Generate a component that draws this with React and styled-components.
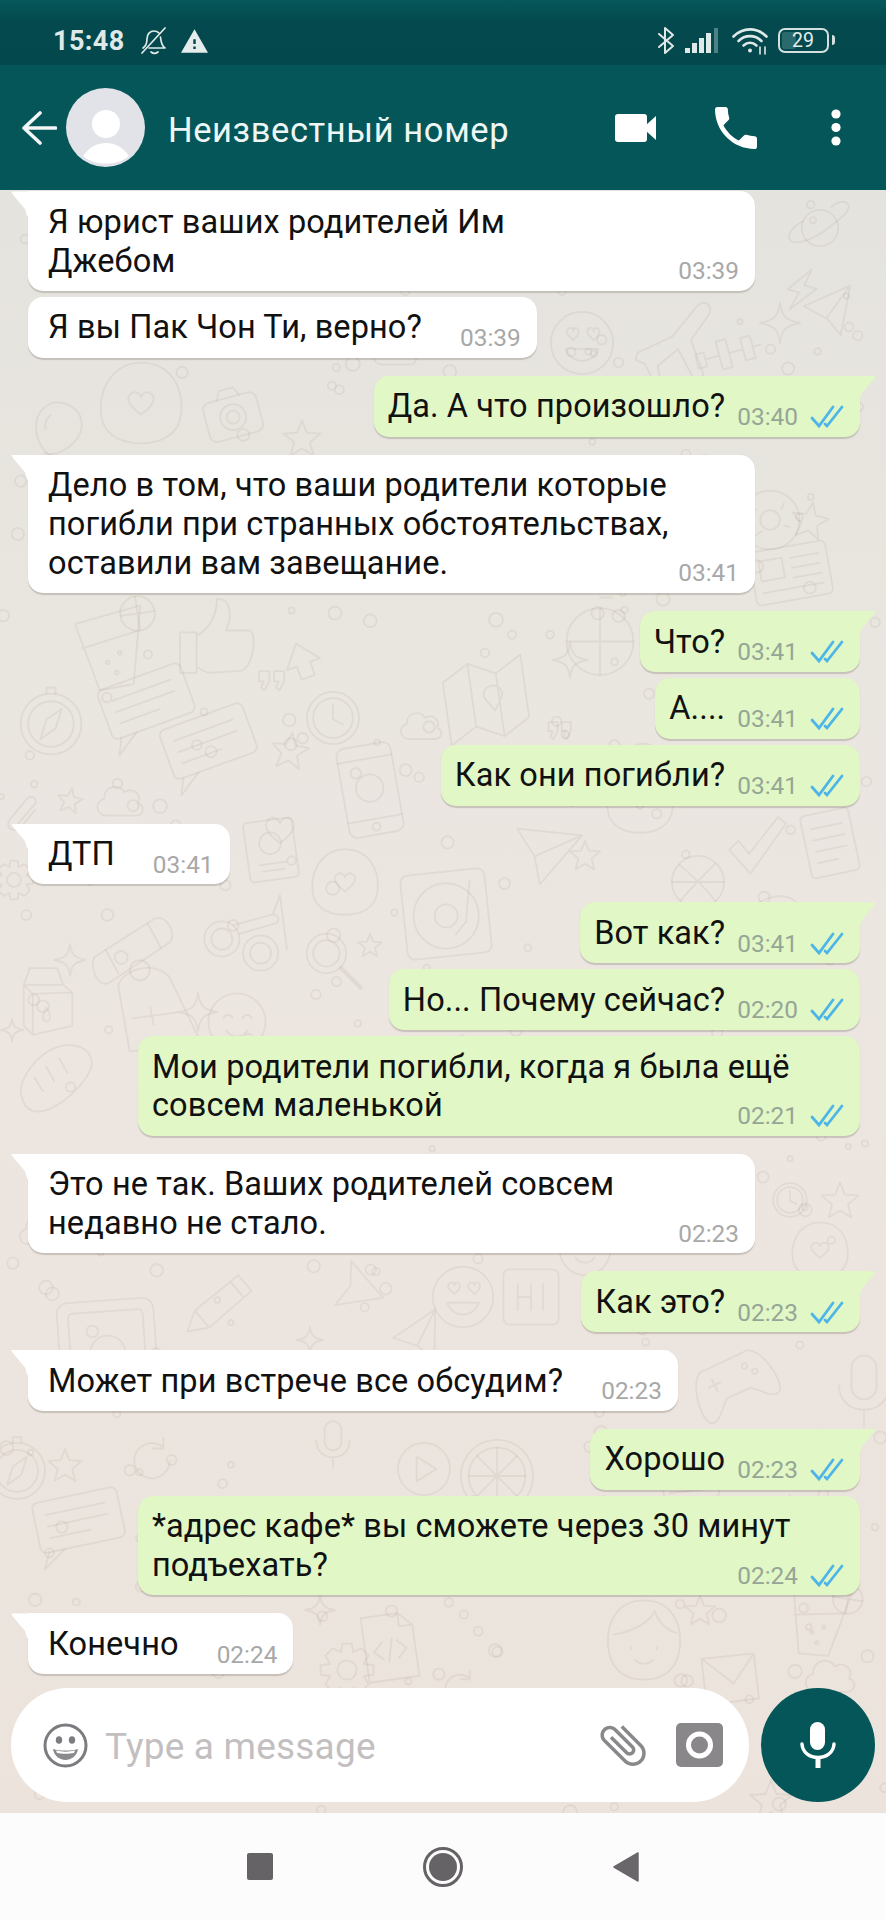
import React from "react";
import styled, { createGlobalStyle } from "styled-components";

const Global = createGlobalStyle`
  html, body { margin: 0; padding: 0; background: #fdfcfd; }
  #root { width: 886px; height: 1920px; }
  * { box-sizing: border-box; }
`;

const Page = styled.div`
  width: 886px;
  height: 1920px;
  display: flex;
  flex-direction: column;
  font-family: Roboto, "Noto Sans", sans-serif;
  overflow: hidden;
`;

/* ---------- status bar ---------- */
const StatusBar = styled.div`
  height: 65px;
  flex: none;
  display: flex;
  align-items: center;
  padding: 16px 52px 0 53px;
  background: linear-gradient(#06585a 0, #03494d 35%, #03484c 100%);
  color: #dfe9e8;
`;
const Clock = styled.span`
  font-size: 27px;
  font-weight: 700;
  letter-spacing: 0.4px;
  width: 74px;
`;
const StatusLeft = styled.div`
  display: flex;
  align-items: center;
  gap: 14px;
  flex: 1;
`;
const StatusRight = styled.div`
  display: flex;
  align-items: center;
  gap: 10px;
`;
const Battery = styled.div`
  position: relative;
  width: 51px;
  height: 25px;
  border: 2.5px solid #d3e0df;
  border-radius: 7px;
  margin: 0 5px 0 -1px;
  display: flex;
  align-items: center;
  justify-content: center;
  font-size: 19.5px;
  color: #e6eeed;
  &::before {
    content: "";
    position: absolute;
    left: 2px;
    top: 2px;
    bottom: 2px;
    width: 14px;
    background: #2b6a6c;
    border-radius: 2px;
  }
  &::after {
    content: "";
    position: absolute;
    right: -8px;
    top: 5px;
    width: 3.5px;
    height: 10px;
    border-radius: 0 3px 3px 0;
    background: #d3e0df;
  }
`;
const BatteryText = styled.span`
  position: relative;
  margin-right: 1px;
`;

/* ---------- header ---------- */
const Header = styled.header`
  height: 125px;
  flex: none;
  display: flex;
  align-items: center;
  padding: 0 45px 0 21px;
  background: #045658;
  position: relative;
  z-index: 2;
`;
const Avatar = styled.svg`
  width: 79px;
  height: 79px;
  margin-left: 9px;
  flex: none;
`;
const Title = styled.div`
  flex: 1;
  margin-left: 23px;
  margin-top: 4px;
  font-size: 34.5px;
  letter-spacing: 0.6px;
  color: #eef6f5;
`;
const Actions = styled.div`
  display: flex;
  align-items: center;
`;
const VideoIcon = styled.svg`
  width: 41px;
  height: 28px;
  margin-right: 59px;
`;
const PhoneIcon = styled.svg`
  width: 42px;
  height: 42px;
  margin-right: 74px;
`;
const DotsIcon = styled.svg`
  width: 10px;
  height: 37px;
`;

/* ---------- chat ---------- */
const Chat = styled.main`
  position: relative;
  flex: 1;
  min-height: 0;
  display: flex;
  flex-direction: column;
  overflow: hidden;
  background: linear-gradient(#e5e3de 0, #e8e5df 22%, #ece6e1 45%, #ece5df 70%, #ebe3dc 100%);
`;
const Wallpaper = styled.svg`
  position: absolute;
  left: 0;
  top: 0;
  width: 886px;
  height: 1623px;
  fill: none;
  stroke: rgba(112, 98, 84, 0.085);
  stroke-width: 1.8;
  stroke-linecap: round;
  stroke-linejoin: round;
  filter: blur(0.35px);
  * { vector-effect: non-scaling-stroke; }
`;
const Messages = styled.div`
  position: relative;
  flex: 1;
  min-height: 0;
  padding: 1.4px 26px 0 28px;
  display: flex;
  flex-direction: column;
`;
const Bubble = styled.div`
  position: relative;
  align-self: ${(p) => (p.$out ? "flex-end" : "flex-start")};
  width: ${(p) => (p.$wide ? (p.$out ? "722px" : "727px") : "auto")};
  margin-top: ${(p) => p.$gap}px;
  padding: 11.5px 16px 10.6px ${(p) => (p.$out ? 14 : 20)}px;
  display: ${(p) => (p.$wide ? "grid" : "flex")};
  align-items: flex-end;
  gap: ${(p) => (p.$out ? 12 : 38)}px;
  border-radius: 15px;
  ${(p) => p.$tail && (p.$out ? "border-top-right-radius: 0;" : "border-top-left-radius: 0;")}
  background: ${(p) => (p.$out ? "#e1f7c6" : "#ffffff")};
  box-shadow: 0 1.5px 1px rgba(60, 50, 40, 0.2);
  ${(p) =>
    p.$wide &&
    `& > * {
      grid-area: 1 / 1;
    }`}
  ${(p) =>
    p.$tail &&
    `&::before {
      content: "";
      position: absolute;
      top: 0;
      ${p.$out ? "right: -16px;" : "left: -17px;"}
      width: 18px;
      height: 25px;
      background: ${p.$out ? "#e1f7c6" : "#ffffff"};
      clip-path: ${
        p.$out
          ? "polygon(0 0, 100% 0, 85% 16%, 55% 42%, 20% 70%, 10% 100%, 0 100%)"
          : "polygon(0 0, 100% 0, 100% 100%, 90% 100%, 78% 70%, 45% 42%, 15% 16%)"
      };
    }`}
`;
const BubbleText = styled.div`
  font-size: 32.5px;
  line-height: 38.75px;
  letter-spacing: 0.1px;
  color: #111;
`;
const Line = styled.div`
  width: fit-content;
  white-space: nowrap;
`;
const Meta = styled.div`
  flex: none;
  justify-self: end;
  display: flex;
  align-items: center;
  gap: 12px;
  margin-bottom: -4px;
`;
const Time = styled.span`
  font-size: 24.4px;
  line-height: 26px;
  color: ${(p) => (p.$out ? "#95a696" : "#a8a8a8")};
`;
const Ticks = styled.svg`
  width: 34px;
  height: 24px;
  fill: none;
  stroke: #4db5e8;
  stroke-width: 2.8;
  stroke-linecap: round;
`;

/* ---------- composer ---------- */
const Composer = styled.div`
  position: relative;
  flex: none;
  display: flex;
  gap: 12px;
  padding: 0 11px 11px;
`;
const InputBox = styled.div`
  width: 738px;
  height: 114px;
  border-radius: 57px;
  background: #fff;
  display: flex;
  align-items: center;
  padding: 0 26px 0 32px;
`;
const Placeholder = styled.span`
  flex: 1;
  margin-left: 17px;
  margin-top: 3px;
  font-size: 37px;
  letter-spacing: 0.2px;
  color: #c3bfc1;
`;
const EmojiIcon = styled.svg`
  width: 45px;
  height: 45px;
  flex: none;
`;
const ClipIcon = styled.svg`
  width: 56px;
  height: 56px;
  margin-right: 25px;
  flex: none;
`;
const CameraIcon = styled.svg`
  width: 47px;
  height: 44px;
  flex: none;
`;
const MicButton = styled.div`
  width: 114px;
  height: 114px;
  border-radius: 50%;
  background: #045658;
  display: flex;
  align-items: center;
  justify-content: center;
`;
const MicIcon = styled.svg`
  width: 36px;
  height: 46px;
`;

/* ---------- nav ---------- */
const Nav = styled.nav`
  flex: none;
  height: 107px;
  background: #fdfcfd;
  display: flex;
  align-items: center;
  justify-content: center;
  gap: 150px;
`;
const NavSquare = styled.div`
  width: 26px;
  height: 27px;
  border-radius: 2px;
  background: #666367;
`;
const NavHome = styled.svg`
  width: 40px;
  height: 40px;
`;
const NavBack = styled.svg`
  width: 26px;
  height: 30px;
`;

/* ---------- wallpaper doodles, each in a 100x100 box ---------- */
const D = {
  milk: <><path d="M22 30 L30 8 L66 8 L74 30 L86 40 L86 84 L34 96 L22 84 Z M22 30 L74 30 M34 42 L86 40 M34 42 L22 30 M34 42 L34 96" /><path d="M52 60 C46 70 46 78 52 78 C58 78 58 70 52 60Z" /></>,
  glasses: <><circle cx="26" cy="58" r="20" /><circle cx="26" cy="58" r="12" /><circle cx="70" cy="74" r="20" /><circle cx="70" cy="74" r="12" /><path d="M40 42 L84 30 C90 30 92 36 88 40 L46 52 M84 30 L92 8 L100 70" /></>,
  camera: <><rect x="12" y="28" width="76" height="56" rx="10" /><circle cx="50" cy="56" r="18" /><circle cx="50" cy="56" r="9" /><path d="M34 28 L40 16 L60 16 L66 28" /></>,
  star: <path d="M50 10 L61 38 L92 40 L68 60 L76 90 L50 74 L24 90 L32 60 L8 40 L39 38 Z" />,
  spark: <path d="M50 6 C54 36 62 44 94 50 C62 56 54 64 50 94 C46 64 38 56 6 50 C38 44 46 36 50 6Z" />,
  heart: <path d="M50 86 C14 60 6 40 14 26 C24 10 44 14 50 32 C56 14 76 10 86 26 C94 40 86 60 50 86Z" />,
  blob: <><path d="M50 8 C78 8 94 30 92 60 C90 84 70 92 50 92 C24 92 8 80 8 56 C8 30 24 8 50 8Z" /><path d="M50 62 C36 52 34 44 40 40 C45 37 49 40 50 44 C51 40 55 37 60 40 C66 44 64 52 50 62Z" /></>,
  planet: <><circle cx="50" cy="50" r="26" /><path d="M26 40 C8 50 2 62 8 68 C16 76 44 64 62 50 C80 36 96 24 90 16 C86 10 76 12 66 20" /></>,
  bolt: <path d="M58 6 L22 56 L46 56 L36 94 L78 40 L52 40 Z" />,
  face: <><circle cx="50" cy="50" r="42" /><path d="M28 58 C36 80 64 80 72 58 Z" /><path d="M30 38 C26 30 38 26 38 34 C38 26 50 30 44 40 L38 46Z" /><path d="M58 38 C54 30 66 26 66 34 C66 26 78 30 72 40 L66 46Z" /></>,
  smile: <><circle cx="50" cy="50" r="42" /><path d="M30 44 C34 38 40 38 44 44 M58 44 C62 38 68 38 72 44 M34 62 C42 74 58 74 66 62" /></>,
  plane: <path d="M6 64 L44 46 L70 14 C78 6 88 10 84 22 L64 50 L78 88 L68 94 L50 60 L28 78 L30 90 L22 92 L14 76 L4 72 Z" />,
  paper: <path d="M6 30 L94 8 L62 92 L42 58 Z M42 58 L94 8" />,
  card: <><rect x="6" y="22" width="88" height="52" rx="6" /><path d="M18 36 L80 36 M18 48 L80 48 M18 60 L60 60 M14 74 L6 90 L30 74" /></>,
  compass: <><circle cx="50" cy="54" r="40" /><circle cx="50" cy="54" r="30" /><path d="M64 34 L56 60 L36 74 L44 48 Z M44 14 L44 6 L56 6 L56 14" /></>,
  clock: <><circle cx="50" cy="50" r="42" /><circle cx="50" cy="50" r="32" /><path d="M50 28 L50 52 L66 60" /></>,
  map: <path d="M8 26 L36 10 L64 24 L92 8 L92 74 L64 90 L36 76 L8 92 Z M36 10 L36 76 M64 24 L64 90 M58 36 C50 36 46 44 50 50 L58 62 L66 50 C70 44 66 36 58 36Z" />,
  cloud: <path d="M26 78 C6 78 4 52 22 48 C20 26 48 18 58 36 C72 26 90 40 82 56 C96 60 92 78 78 78 Z" />,
  phone: <><rect x="22" y="4" width="56" height="92" rx="8" /><path d="M22 18 L78 18 M22 80 L78 80" /><circle cx="50" cy="48" r="14" /><circle cx="50" cy="88" r="4" /></>,
  passport: <><rect x="14" y="6" width="72" height="88" rx="6" /><circle cx="50" cy="40" r="16" /><path d="M30 70 L70 70 M34 80 L66 80" /></>,
  record: <><rect x="6" y="6" width="88" height="88" rx="8" /><circle cx="50" cy="52" r="34" /><circle cx="50" cy="52" r="12" /><path d="M78 18 L70 60 L58 72" /></>,
  flash: <><path d="M6 50 L72 8 C84 4 96 24 88 34 L22 78 C10 84 0 62 6 50 Z" /><path d="M18 42 L32 68 M64 14 L78 40" /></>,
  bag: <><path d="M22 26 C30 8 64 8 74 26 L92 90 L76 98 L22 92 Z" /><circle cx="46" cy="14" r="10" /><path d="M30 60 L76 62 M50 52 L50 70" /></>,
  lens: <><circle cx="40" cy="40" r="30" /><circle cx="40" cy="40" r="20" /><path d="M62 62 L92 92" strokeWidth="4" /></>,
  wheel: <><circle cx="50" cy="54" r="38" /><path d="M50 16 L50 92 M12 54 L88 54 M50 4 L64 4" /></>,
  thumb: <path d="M12 46 L30 46 L30 90 L12 90 Z M30 50 C46 40 52 26 52 10 C66 8 70 26 62 44 L88 44 C96 48 92 84 78 88 L42 90 L30 84" />,
  glass: <><path d="M14 22 L84 12 L66 92 L30 94 Z M18 48 L78 38" /><circle cx="80" cy="20" r="18" /><path d="M80 2 L80 38 M62 20 L98 20" /><circle cx="42" cy="66" r="2" /><circle cx="56" cy="58" r="2" /><circle cx="50" cy="78" r="2" /></>,
  ball: <><circle cx="50" cy="50" r="42" /><path d="M20 22 C44 42 58 56 78 80 M78 20 C56 42 40 58 22 80 M8 50 L92 50" /></>,
  doc: <><rect x="16" y="6" width="68" height="88" rx="6" /><path d="M28 26 L72 26 M28 42 L72 42 M28 58 L72 58 M28 74 L56 74" /></>,
  check: <path d="M8 56 L22 42 L38 62 L82 6 L94 16 L40 92 Z" />,
  donut: <><circle cx="50" cy="50" r="42" /><circle cx="50" cy="50" r="14" /><path d="M24 30 L30 36 M70 26 L66 34 M78 60 L70 58 M30 72 L38 66" /></>,
  news: <><rect x="4" y="18" width="92" height="64" rx="6" /><rect x="14" y="30" width="28" height="24" /><path d="M52 32 L86 32 M52 44 L86 44 M52 56 L86 56 M14 68 L86 68" /></>,
  pencil: <path d="M8 92 L16 62 L72 8 L92 28 L38 84 Z M16 62 L38 84 M62 18 L82 38" />,
  tablet: <><rect x="6" y="14" width="88" height="72" rx="10" /><rect x="16" y="24" width="68" height="52" rx="4" /><circle cx="50" cy="62" r="16" /></>,
  play: <path d="M14 8 L90 50 L14 92 L28 50 Z" />,
  video: <><circle cx="50" cy="50" r="42" /><path d="M38 30 L70 50 L38 70 Z" /></>,
  hi: <><rect x="8" y="8" width="84" height="84" rx="10" /><path d="M30 30 L30 70 M50 30 L50 70 M30 50 L50 50 M68 30 L68 70" /></>,
  lemon: <><circle cx="50" cy="50" r="42" /><circle cx="50" cy="50" r="33" /><path d="M50 17 L50 83 M17 50 L83 50 M27 27 L73 73 M73 27 L27 73" /></>,
  mic: <><rect x="34" y="6" width="32" height="56" rx="16" /><path d="M18 44 C18 86 82 86 82 44 M50 76 L50 96" /></>,
  refresh: <path d="M84 50 A34 34 0 1 1 70 22 M72 6 L72 26 L52 26" />,
  girl: <><path d="M50 6 C78 6 92 28 90 56 C88 84 70 94 50 94 C30 94 12 84 10 56 C8 28 22 6 50 6Z" /><path d="M16 44 C40 40 56 30 62 18 C66 30 76 40 86 42 M36 58 L36 60 M64 58 L64 60 M40 72 C46 78 54 78 60 72" /></>,
  code: <><path d="M16 6 L66 6 L84 24 L84 94 L16 94 Z M66 6 L66 24 L84 24" /><path d="M40 42 L28 54 L40 66 M60 42 L72 54 L60 66 M54 38 L46 70" /></>,
  pad: <><path d="M22 24 L78 24 C92 28 100 68 92 78 C84 86 74 70 64 62 L36 62 C26 70 16 86 8 78 C0 68 8 28 22 24Z" /><path d="M30 36 L30 50 M23 43 L37 43" /><circle cx="68" cy="38" r="3" /><circle cx="76" cy="48" r="3" /></>,
  gear: <><path d="M42 6 L58 6 L60 20 L74 14 L86 26 L78 40 L94 42 L94 58 L78 60 L86 74 L74 86 L60 80 L58 94 L42 94 L40 80 L26 86 L14 74 L22 60 L6 58 L6 42 L22 40 L14 26 L26 14 L40 20 Z" /><circle cx="50" cy="50" r="16" /></>,
  mail: <path d="M6 28 L76 8 L94 68 L24 90 Z M6 28 L56 54 L76 8" />,
  bread: <path d="M8 72 C2 52 30 14 62 10 C88 8 100 26 90 44 C78 66 44 96 22 90 C14 88 10 82 8 72Z M38 36 L48 54 M54 26 L64 44 M24 50 L34 66" />,
  clip: <path d="M30 78 L74 26 C84 14 66 2 56 14 L18 60 C4 78 28 94 42 78 L76 38" />,
  barbell: <path d="M4 40 L16 40 L16 60 L4 60 Z M16 50 L36 50 M36 30 L50 30 L50 70 L36 70 Z M50 50 L70 50 M70 34 L84 34 L84 66 L70 66 Z M84 50 L96 50" />,
  balloon: <><path d="M50 6 C76 6 90 30 78 56 C70 72 58 80 50 82 C42 80 30 72 22 56 C10 30 24 6 50 6Z" /><path d="M44 82 L56 82 L50 94Z M34 28 C30 36 30 44 34 50" /></>,
  arrow: <path d="M10 60 L50 10 L90 60 L66 60 L66 92 L34 92 L34 60 Z" />,
  quote: <path d="M12 24 L42 24 L42 54 L28 80 L18 72 L26 54 L12 54 Z M56 24 L86 24 L86 54 L72 80 L62 72 L70 54 L56 54 Z" />,
};

/* placed in chat coordinates (page y minus 190) */
const doodles = [
  ["planet", 820, 38, 70, 0], ["bolt", 802, 100, 50, 15], ["paper", 830, 123, 56, -10], ["spark", 780, 133, 46, 0],
  ["face", 582, 153, 74, 0], ["plane", 678, 150, 92, 0], ["barbell", 729, 163, 72, -15], ["blob", 141, 213, 96, 0],
  ["camera", 232, 223, 72, -15], ["balloon", 56, 243, 70, 20], ["star", 302, 248, 44, 0], ["cloud", 395, 160, 52, 0],
  ["gear", 60, 140, 62, 10], ["thumb", 215, 446, 92, 0], ["donut", 770, 330, 70, 0], ["news", 791, 383, 84, -10],
  ["star", 810, 330, 44, 10], ["glass", 113, 456, 96, -8], ["wheel", 600, 448, 88, 0], ["arrow", 302, 470, 44, -20],
  ["spark", 570, 470, 40, 0], ["compass", 51, 531, 76, 0], ["card", 147, 513, 100, -20], ["card", 209, 553, 100, -20],
  ["clock", 333, 528, 62, 0], ["map", 486, 510, 96, -8], ["cloud", 421, 535, 50, 0], ["quote", 272, 490, 34, 0],
  ["quote", 560, 540, 30, 0], ["star", 290, 560, 44, 8], ["phone", 370, 600, 98, -10], ["clip", 24, 625, 44, 0],
  ["star", 70, 610, 30, 10], ["cloud", 120, 610, 56, 0], ["passport", 271, 660, 68, -8], ["heart", 280, 640, 36, 0],
  ["blob", 345, 692, 78, 0], ["record", 446, 724, 96, -6], ["paper", 542, 663, 72, 20], ["lens", 650, 580, 66, 0],
  ["ball", 698, 692, 62, 0], ["doc", 830, 653, 72, -12], ["check", 757, 656, 66, 0], ["bread", 770, 730, 64, 10],
  ["blob", 640, 610, 78, 0], ["star", 585, 665, 36, 0], ["glasses", 243, 742, 88, 0], ["gear", 14, 690, 44, 0],
  ["spark", 70, 770, 36, 0], ["flash", 135, 767, 92, 0], ["bag", 150, 815, 100, -10], ["spark", 198, 822, 44, 0],
  ["milk", 45, 810, 76, 0], ["smile", 237, 832, 68, 0], ["lens", 333, 770, 66, 0], ["star", 370, 755, 28, 0],
  ["bread", 56, 888, 82, 0], ["spark", 12, 840, 26, 0], ["clock", 790, 1010, 40, 0], ["pencil", 220, 1114, 72, 5],
  ["tablet", 107, 1150, 110, -4], ["play", 362, 1100, 56, 20], ["face", 463, 1107, 72, 0], ["hi", 531, 1107, 66, 0],
  ["spark", 310, 1150, 30, 0], ["paper", 420, 1150, 56, -20], ["compass", 17, 1278, 70, 0], ["lemon", 497, 1286, 86, 0],
  ["video", 424, 1279, 62, 0], ["mic", 333, 1254, 52, 0], ["refresh", 152, 1271, 52, 0], ["star", 65, 1275, 40, 0],
  ["card", 79, 1332, 98, -12], ["girl", 644, 1450, 90, 0], ["code", 390, 1457, 74, -8], ["pad", 734, 1193, 92, -25],
  ["mic", 864, 1200, 78, 0], ["gear", 347, 1480, 60, 0], ["mail", 730, 1490, 72, 10], ["star", 771, 1610, 50, 0],
  ["refresh", 460, 1500, 44, 0], ["star", 700, 1420, 36, 0], ["glass", 820, 1430, 82, 8],
  ["cloud", 830, 1485, 60, 0], ["spark", 320, 1420, 34, 0], ["smile", 585, 1060, 60, 0], ["cloud", 40, 1040, 50, 0],
  ["star", 840, 1010, 44, 0], ["blob", 820, 1060, 66, 0], ["news", 690, 1290, 60, -6], ["spark", 790, 1320, 34, 0],
];

const specks = (() => {
  let seed = 73;
  const rnd = () => {
    seed = (seed * 1664525 + 1013904223) % 4294967296;
    return seed / 4294967296;
  };
  return Array.from({ length: 330 }, () => [rnd() * 886, rnd() * 1623, 2.5 + rnd() * 4.5]);
})();

const messages = [
  { lines: ["Я юрист ваших родителей Им", "Джебом"], time: "03:39", gap: 0, tail: true, wide: true },
  { lines: ["Я вы Пак Чон Ти, верно?"], time: "03:39", gap: 6 },
  { out: true, lines: ["Да. А что произошло?"], time: "03:40", gap: 18, tail: true },
  { lines: ["Дело в том, что ваши родители которые", "погибли при странных обстоятельствах,", "оставили вам завещание."], time: "03:41", gap: 18, tail: true, wide: true },
  { out: true, lines: ["Что?"], time: "03:41", gap: 18, tail: true },
  { out: true, lines: ["А...."], time: "03:41", gap: 6 },
  { out: true, lines: ["Как они погибли?"], time: "03:41", gap: 6 },
  { lines: ["ДТП"], time: "03:41", gap: 18, tail: true },
  { out: true, lines: ["Вот как?"], time: "03:41", gap: 18, tail: true },
  { out: true, lines: ["Но... Почему сейчас?"], time: "02:20", gap: 6 },
  { out: true, lines: ["Мои родители погибли, когда я была ещё", "совсем маленькой"], time: "02:21", gap: 6, wide: true },
  { lines: ["Это не так. Ваших родителей совсем", "недавно не стало."], time: "02:23", gap: 18, tail: true, wide: true },
  { out: true, lines: ["Как это?"], time: "02:23", gap: 18, tail: true },
  { lines: ["Может при встрече все обсудим?"], time: "02:23", gap: 18, tail: true },
  { out: true, lines: ["Хорошо"], time: "02:23", gap: 18, tail: true },
  { out: true, lines: ["*адрес кафе* вы сможете через 30 минут", "подъехать?"], time: "02:24", gap: 6, wide: true },
  { lines: ["Конечно"], time: "02:24", gap: 18, tail: true },
];

function Message({ out, lines, time, gap, tail, wide }) {
  return (
    <Bubble $out={out} $gap={gap} $tail={tail} $wide={wide}>
      <BubbleText>
        {lines.map((line) => (
          <Line key={line}>{line}</Line>
        ))}
      </BubbleText>
      <Meta>
        <Time $out={out}>{time}</Time>
        {out && (
          <Ticks viewBox="0 0 34 24">
            <path d="M2 13 L9 21 L23 2" />
            <path d="M15 19 L17 21 L32 2" />
          </Ticks>
        )}
      </Meta>
    </Bubble>
  );
}

export default function App() {
  return (
    <Page>
      <Global />
      <StatusBar>
        <StatusLeft>
          <Clock>15:48</Clock>
          <svg width="26" height="28" viewBox="0 0 26 28" fill="none" stroke="#dfe9e8" strokeWidth="1.7" strokeLinecap="round" strokeLinejoin="round">
            <path d="M2 21 C5 19 6 16 6 12 C6 7 9 4 13 4 C15 4 17 5 18 6 M19.5 10 C20 14 20 18 24 21 L8 21" />
            <path d="M10 25 C12 26.5 15 26.5 17 25" />
            <path d="M1 26 L24 1" />
          </svg>
          <svg width="27" height="24" viewBox="1 2 22 19" fill="#e4ecec">
            <path d="M1 21h22L12 2 1 21zm12-3h-2v-2h2v2zm0-4h-2v-4h2v4z" />
          </svg>
        </StatusLeft>
        <StatusRight>
          <svg width="18" height="29" viewBox="0 0 18 29" fill="none" stroke="#dfe9e8" strokeWidth="2" strokeLinejoin="round" strokeLinecap="round">
            <path d="M2 8 L16 20 L8 27 L8 2 L16 9 L2 21" />
          </svg>
          <svg width="34" height="25" viewBox="0 0 34 25">
            <rect x="0" y="20" width="5" height="5" fill="#dfe9e8" />
            <rect x="7" y="15" width="5" height="10" fill="#dfe9e8" />
            <rect x="14" y="10" width="5" height="15" fill="#dfe9e8" />
            <rect x="21" y="5" width="5" height="20" fill="#dfe9e8" />
            <rect x="29" y="0" width="4" height="25" fill="#4d8284" />
          </svg>
          <svg width="37" height="28" viewBox="0 0 37 28" fill="none" stroke="#dfe9e8" strokeWidth="2.6" strokeLinecap="round" style={{ marginLeft: 3 }}>
            <path d="M1.5 9.5 C11 0 25 0 34.5 9.5" />
            <path d="M6.5 14 C13 7.5 23 7.5 29.5 14" />
            <path d="M11.5 18.5 C15.5 15 20.5 15 24.5 18.5" />
            <circle cx="18" cy="23.5" r="2" fill="#dfe9e8" stroke="none" />
            <path d="M28 20 L28 27 M33 20 L33 27" strokeWidth="1.6" />
          </svg>
          <Battery>
            <BatteryText>29</BatteryText>
          </Battery>
        </StatusRight>
      </StatusBar>

      <Header>
        <svg width="36" height="34" viewBox="0 0 36 34" fill="none" stroke="#f2f6f6" strokeWidth="3.6" strokeLinecap="round" strokeLinejoin="round">
          <path d="M34.5 17 L3 17 M19 2 L3 17 L19 32" />
        </svg>
        <Avatar viewBox="0 0 79 79">
          <circle cx="39.5" cy="39.5" r="39.5" fill="#e1e3e9" />
          <circle cx="40" cy="36" r="14" fill="#fff" />
          <path d="M17 68 C24 58 32 55 40 55 C48 55 56 58 63 68 C56 74 48 75.5 40 75.5 C32 75.5 24 74 17 68Z" fill="#fff" />
        </Avatar>
        <Title>Неизвестный номер</Title>
        <Actions>
          <VideoIcon viewBox="0 0 41 28">
            <rect x="0" y="0" width="32" height="28" rx="3" fill="#fff" />
            <path d="M31 11 L41 2 L41 26 L31 17 Z" fill="#fff" />
          </VideoIcon>
          <PhoneIcon viewBox="3 3 18 18">
            <path fill="#fff" d="M6.62 10.79c1.44 2.83 3.76 5.14 6.59 6.59l2.2-2.2c.27-.27.67-.36 1.02-.24 1.12.37 2.33.57 3.57.57.55 0 1 .45 1 1V20c0 .55-.45 1-1 1-9.39 0-17-7.61-17-17 0-.55.45-1 1-1h3.5c.55 0 1 .45 1 1 0 1.25.2 2.45.57 3.57.11.35.03.74-.25 1.02l-2.2 2.2z" />
          </PhoneIcon>
          <DotsIcon viewBox="0 0 10 37">
            <circle cx="5" cy="5" r="4.6" fill="#fff" />
            <circle cx="5" cy="18.5" r="4.6" fill="#fff" />
            <circle cx="5" cy="32" r="4.6" fill="#fff" />
          </DotsIcon>
        </Actions>
      </Header>

      <Chat>
        <Wallpaper viewBox="0 0 886 1623">
          {specks.map(([x, y, r], i) => (
            <circle key={i} cx={x} cy={y} r={r} />
          ))}
          {doodles.map(([k, x, y, s, a], i) => (
            <g key={i} transform={`translate(${x - s / 2} ${y - s / 2}) scale(${s / 100}) rotate(${a} 50 50)`}>
              {D[k]}
            </g>
          ))}
        </Wallpaper>
        <Messages>
          {messages.map((m, i) => (
            <Message key={i} {...m} />
          ))}
        </Messages>
        <Composer>
          <InputBox>
            <EmojiIcon viewBox="0 0 45 45">
              <circle cx="22.5" cy="22.5" r="20.5" fill="none" stroke="#7b7b80" strokeWidth="3" />
              <ellipse cx="16" cy="17" rx="3.2" ry="3.8" fill="#7b7b80" />
              <ellipse cx="29" cy="17" rx="3.2" ry="3.8" fill="#7b7b80" />
              <path d="M10 26 C17 28 28 28 35 26 C34 33 28 37 22.5 37 C17 37 11 33 10 26Z" fill="#8a8a8e" />
              <path d="M13 27.5 C19 29 26 29 32 27.5 L31 30 C26 31 19 31 14 30Z" fill="#fff" />
            </EmojiIcon>
            <Placeholder>Type a message</Placeholder>
            <ClipIcon viewBox="0 0 24 24">
              <path transform="rotate(-45 12 12)" fill="#8a888b" d="M16.5 6v11.5c0 2.21-1.79 4-4 4s-4-1.79-4-4V5c0-1.38 1.12-2.5 2.5-2.5s2.5 1.12 2.5 2.5v10.5c0 .55-.45 1-1 1s-1-.45-1-1V6H10v9.5c0 1.38 1.12 2.5 2.5 2.5s2.5-1.12 2.5-2.5V5c0-2.21-1.79-4-4-4S7 2.79 7 5v12.5c0 3.04 2.46 5.5 5.5 5.5s5.5-2.46 5.5-5.5V6h-1.5z" />
            </ClipIcon>
            <CameraIcon viewBox="0 0 47 44">
              <rect width="47" height="44" rx="5" fill="#8a878a" />
              <circle cx="23.5" cy="22" r="11" fill="#8a878a" stroke="#fff" strokeWidth="5" />
            </CameraIcon>
          </InputBox>
          <MicButton>
            <MicIcon viewBox="0 0 36 46">
              <rect x="10" y="0" width="15" height="28" rx="7.5" fill="#fff" />
              <path d="M2 22 C3 40 33 40 34 22" fill="none" stroke="#fff" strokeWidth="3.5" strokeLinecap="round" />
              <rect x="15.5" y="34" width="5" height="12" fill="#fff" />
            </MicIcon>
          </MicButton>
        </Composer>
      </Chat>

      <Nav>
        <NavSquare />
        <NavHome viewBox="0 0 40 40">
          <circle cx="20" cy="20" r="18.5" fill="none" stroke="#666367" strokeWidth="3" />
          <circle cx="20" cy="20" r="14" fill="#666367" />
        </NavHome>
        <NavBack viewBox="0 0 26 30">
          <path d="M25 1 L25 29 L1 15 Z" fill="#69676a" stroke="#69676a" strokeWidth="1.5" strokeLinejoin="round" />
        </NavBack>
      </Nav>
    </Page>
  );
}
